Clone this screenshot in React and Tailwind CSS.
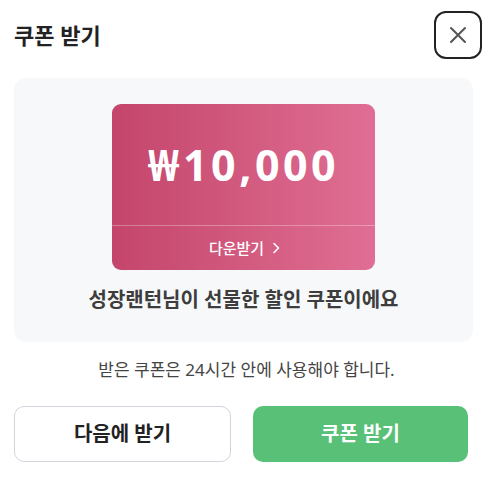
export default function App() {
  return (
    <div
      className="w-[490px] h-[480px] bg-white"
      style={{ fontFamily: '"Noto Sans", "Noto Sans CJK KR", sans-serif' }}
    >
      <div className="flex items-center justify-between pl-[14px] pr-[8px] pt-[11px]">
        <h1 className="text-[22px] font-bold text-[#222] leading-[30px]">쿠폰 받기</h1>
        <button className="w-[48px] h-[48px] rounded-[12px] border-2 border-[#222] flex items-center justify-center">
          <svg width="20" height="20" viewBox="0 0 20 20" fill="none" stroke="#555" strokeWidth="2" strokeLinecap="round">
            <path d="M3 3L17 17M17 3L3 17" />
          </svg>
        </button>
      </div>

      <div className="mx-[14px] mt-[19px] w-[459px] rounded-[12px] bg-[#f7f8fa] pt-[26px] pb-[28px] flex flex-col items-center">
        <div className="w-[263px] h-[166px] rounded-[9px] bg-gradient-to-r from-[#c4456b] to-[#e06e94] flex flex-col text-white">
          <div className="h-[121px] flex items-center justify-center">
            <span className="text-[43px] font-bold leading-none tracking-[3.5px]">₩10,000</span>
          </div>
          <div className="h-px bg-white/30" />
          <div className="flex-1 flex items-center justify-center gap-[8px] text-[15px] font-medium pl-[2px]">
            <span>다운받기</span>
            <svg width="8" height="12" viewBox="0 0 8 12" fill="none" stroke="white" strokeWidth="1.6" strokeLinecap="round" strokeLinejoin="round">
              <path d="M2 1.5L6.5 6L2 10.5" />
            </svg>
          </div>
        </div>
        <p className="mt-[16px] text-[20px] font-bold text-[#3d3d3d] leading-[28px]">
          성장랜턴님이 선물한 할인 쿠폰이에요
        </p>
      </div>

      <p className="mt-[16px] text-center text-[17px] text-[#444] leading-[24px] pl-[3px]">
        받은 쿠폰은 24시간 안에 사용해야 합니다.
      </p>

      <div className="mt-[24px] ml-[14px] w-[454px] flex gap-[22px]">
        <button className="flex-1 h-[56px] rounded-[10px] border border-[#d1d5db] bg-white text-[20px] font-bold text-[#222]">
          다음에 받기
        </button>
        <button className="flex-1 h-[56px] rounded-[10px] bg-[#58c077] text-[20px] font-bold text-white">
          쿠폰 받기
        </button>
      </div>
    </div>
  );
}
